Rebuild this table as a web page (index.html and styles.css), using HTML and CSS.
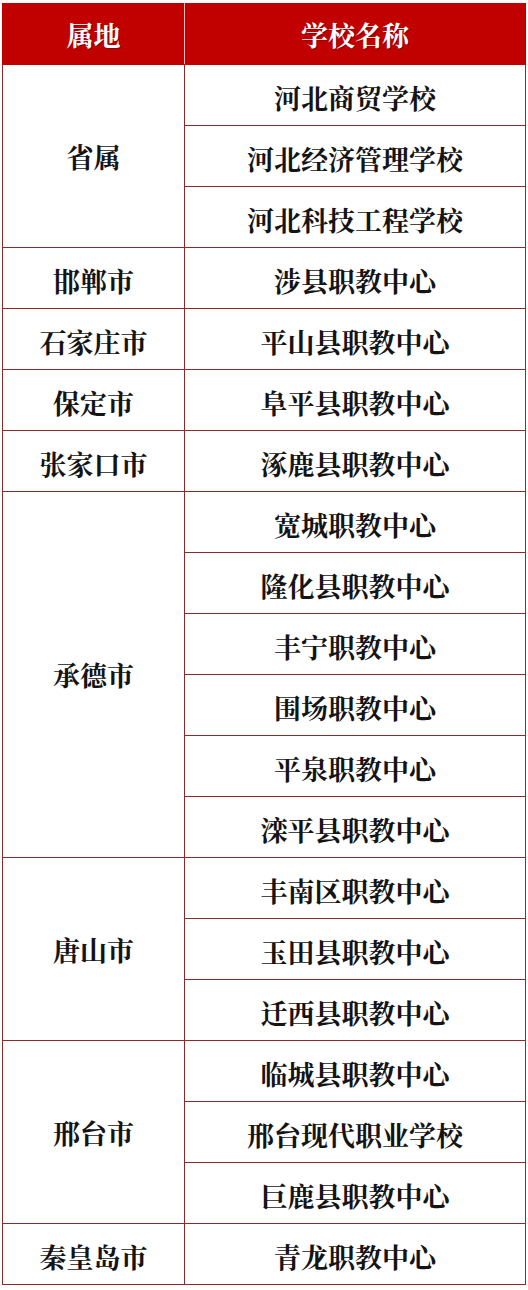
FILE: index.html
```html
<!DOCTYPE html>
<html lang="zh-CN">
<head>
<meta charset="utf-8">
<title>学校名称</title>
<link rel="stylesheet" href="styles.css">
</head>
<body>
<table class="list">
  <thead>
    <tr><th class="c-area">属地</th><th class="c-school">学校名称</th></tr>
  </thead>
  <tbody>
    <tr><td class="group" rowspan="3">省属</td><td>河北商贸学校</td></tr>
    <tr><td>河北经济管理学校</td></tr>
    <tr><td>河北科技工程学校</td></tr>
    <tr><td>邯郸市</td><td>涉县职教中心</td></tr>
    <tr><td>石家庄市</td><td>平山县职教中心</td></tr>
    <tr><td>保定市</td><td>阜平县职教中心</td></tr>
    <tr><td>张家口市</td><td>涿鹿县职教中心</td></tr>
    <tr><td class="group" rowspan="6">承德市</td><td>宽城职教中心</td></tr>
    <tr><td>隆化县职教中心</td></tr>
    <tr><td>丰宁职教中心</td></tr>
    <tr><td>围场职教中心</td></tr>
    <tr><td>平泉职教中心</td></tr>
    <tr><td>滦平县职教中心</td></tr>
    <tr><td class="group" rowspan="3">唐山市</td><td>丰南区职教中心</td></tr>
    <tr><td>玉田县职教中心</td></tr>
    <tr><td>迁西县职教中心</td></tr>
    <tr><td class="group" rowspan="3">邢台市</td><td>临城县职教中心</td></tr>
    <tr><td>邢台现代职业学校</td></tr>
    <tr><td>巨鹿县职教中心</td></tr>
    <tr><td>秦皇岛市</td><td>青龙职教中心</td></tr>
  </tbody>
</table>
</body>
</html>
```
FILE: styles.css
```css
html, body {
  margin: 0;
  padding: 0;
  background: #ffffff;
}
body {
  padding: 3px 0 0 2px;
  font-family: "Noto Serif CJK SC", "Noto Sans CJK SC", "Liberation Serif", serif;
}
.list {
  border-collapse: collapse;
  width: 524px;
  table-layout: fixed;
}
.c-area { width: 182px; }
.list th {
  background: #c10000;
  color: #ffffff;
  font-size: 27px;
  font-weight: 700;
  height: 61px;
  box-sizing: border-box;
  padding: 0;
  text-align: center;
  border: 1px solid #c10000;
  border-right-color: #e8b8b8;
  text-shadow: 1px 1px 1px rgba(80,0,0,0.5);
}
.list th.c-school { border-right-color: #c10000; }
.list td {
  height: 61px;
  padding: 4px 0 0 0;
  box-sizing: border-box;
  text-align: center;
  font-size: 27px;
  font-weight: 700;
  color: #141414;
  border: 1px solid #8e2a2a;
  line-height: 1;
}
.list td.group { padding-top: 0; }
```
